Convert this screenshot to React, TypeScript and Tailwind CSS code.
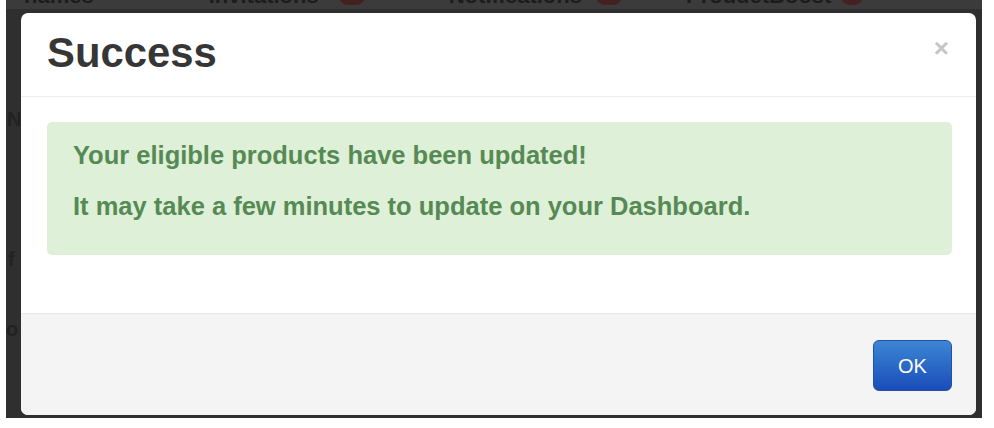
import React from "react";

export default function App() {
  return (
    <div className="w-[994px] h-[428px] bg-white overflow-hidden" style={{ fontFamily: '"Liberation Sans", Arial, sans-serif' }}>
      <div className="ml-[6px] w-[976px] h-[418px] bg-[#2f2f2f] relative overflow-hidden">
        {/* dimmed page behind the backdrop */}
        <div className="absolute left-0 top-0 w-full h-[9px] bg-[#3b3b3b] overflow-hidden">
          <div className="flex items-center text-[22px] leading-[22px] text-[#1c1c1c] font-bold -mt-[15px] whitespace-nowrap">
            <span className="ml-[18px]">names</span>
            <span className="ml-[115px]">Invitations</span>
            <span className="ml-[20px] w-[26px] h-[18px] rounded-full bg-[#452020]" />
            <span className="ml-[84px]">Notifications</span>
            <span className="ml-[14px] w-[26px] h-[18px] rounded-full bg-[#452020]" />
            <span className="ml-[64px]">ProductBoost</span>
            <span className="ml-[10px] w-[22px] h-[18px] rounded-full bg-[#452020]" />
          </div>
        </div>
        <span className="absolute left-[1px] top-[104px] text-[20px] font-bold text-[#222]">N</span>
        <span className="absolute left-[2px] top-[244px] text-[20px] font-bold text-[#222]">f</span>
        <span className="absolute left-[0px] top-[314px] text-[20px] font-bold text-[#222]">o</span>

        <div className="absolute left-[15px] top-[13px] w-[955px] h-[402px] bg-white rounded-[7px] flex flex-col overflow-hidden">
          <div className="h-[84px] border-b border-[#eeeeee] flex items-start justify-between pl-[26px] pr-[27px]">
            <h4 className="text-[41.8px] font-bold text-[#363636] leading-none mt-[19px]">Success</h4>
            <span className="text-[26px] text-[#c6c6c6] font-bold leading-none mt-[22px]">×</span>
          </div>
          <div className="pt-[25px] pl-[26px] pr-[24px] pb-[58px]">
            <div className="bg-[#dff0d8] rounded-[5px] h-[133px] pt-[16px] pl-[26px] text-[25.5px] font-bold text-[#568a55] leading-[35px]">
              <p className="mb-[16px]">Your eligible products have been updated!</p>
              <p>It may take a few minutes to update on your Dashboard.</p>
            </div>
          </div>
          <div className="flex-1 bg-[#f4f4f4] border-t border-[#e8e8e8] flex justify-end items-start pt-[26px] pr-[24px]">
            <button className="w-[79px] h-[51px] rounded-[6px] bg-gradient-to-b from-[#3d86d4] to-[#1c4cb9] text-white text-[20px] border border-[#2150a8]">
              OK
            </button>
          </div>
        </div>
      </div>
    </div>
  );
}
